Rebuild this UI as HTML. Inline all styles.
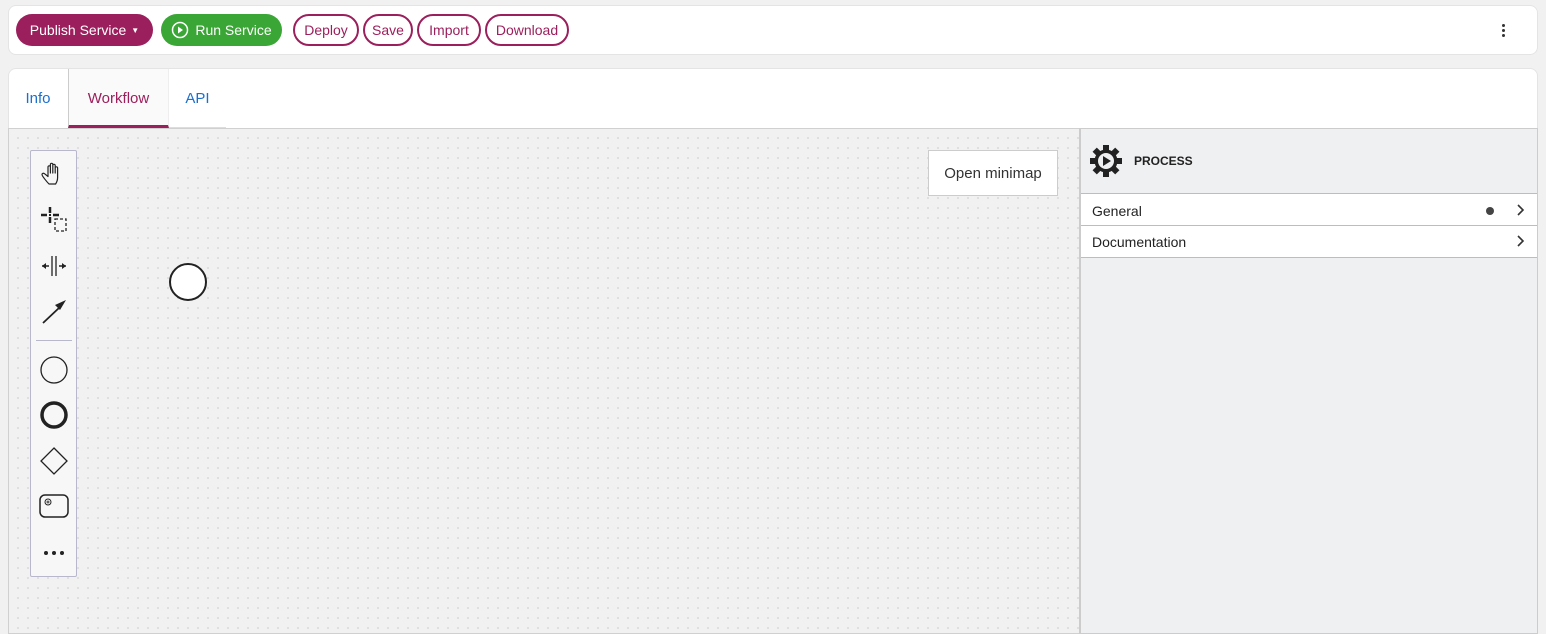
<!DOCTYPE html>
<html><head><style>
body{margin:0;width:1546px;height:634px;background:#f1f1f1;font-family:"Liberation Sans",sans-serif;position:relative;overflow:hidden}
.abs{position:absolute;box-sizing:border-box}
.btn{position:absolute;top:14px;height:32px;border-radius:16px;box-sizing:border-box;font-size:14px;display:flex;align-items:center;justify-content:center}
.ol{border:2px solid #9b1f5c;color:#9b1f5c;background:#fff}
.tab{position:absolute;top:69px;height:59px;font-size:15px;display:flex;align-items:center;justify-content:center;color:#1a6fd0}
.tool{position:absolute;left:0;width:45px;display:flex;justify-content:center}
</style></head><body>
<div class="abs" style="left:8px;top:5px;width:1530px;height:50px;background:#fff;border-radius:8px;border:1px solid #e4e4e4"></div>
<div class="btn" style="left:16px;width:137px;background:#9b1f5c;color:#fff">Publish Service <span style="font-size:8px;margin-left:5px">▼</span></div>
<div class="btn" style="left:161px;width:121px;background:#3aa635;color:#fff"><svg width="18" height="18" viewBox="0 0 18 18" style="margin-right:6px"><circle cx="9" cy="9" r="7.5" fill="none" stroke="#fff" stroke-width="1.5"/><path d="M7 5.5L12 9L7 12.5Z" fill="#fff"/></svg>Run Service</div>
<div class="btn ol" style="left:293px;width:66px">Deploy</div>
<div class="btn ol" style="left:363px;width:50px">Save</div>
<div class="btn ol" style="left:417px;width:64px">Import</div>
<div class="btn ol" style="left:485px;width:84px">Download</div>
<div class="abs" style="left:1502px;top:24px;width:4px;height:16px"><div style="width:3px;height:3px;border-radius:2px;background:#333;margin-bottom:2px"></div><div style="width:3px;height:3px;border-radius:2px;background:#333;margin-bottom:2px"></div><div style="width:3px;height:3px;border-radius:2px;background:#333"></div></div>

<div class="abs" style="left:8px;top:68px;width:1530px;height:61px;background:#fff;border-radius:8px 8px 0 0;border:1px solid #e4e4e4;border-bottom:none"></div>
<div class="tab" style="left:8px;width:60px">Info</div>
<div class="tab" style="left:68px;width:101px;background:#fafafa;color:#9b1f5c;border-left:1px solid #ccc;border-bottom:3px solid #9b1f5c;border-right:1px solid #eee;box-sizing:border-box;padding-top:3px">Workflow</div>
<div class="tab" style="left:169px;width:57px">API</div>
<div class="abs" style="left:169px;top:127px;width:57px;height:1px;background:#ddd"></div>

<div class="abs" style="left:8px;top:128px;width:1072px;height:506px;border:1px solid #d0d0d0;border-right:none;background-color:#f1f1f1;background-image:radial-gradient(#cfcfcf 0.7px,transparent 0.9px);background-size:10px 10px;background-position:4px 4px"></div>

<div class="abs" style="left:30px;top:150px;width:47px;height:427px;background:#f7f7f7;border:1px solid #b8b8cc;border-radius:2px">
 <div class="tool" style="top:10px"><svg width="26" height="26" viewBox="0 0 26 26" fill="none" stroke="#222" stroke-width="1.2" stroke-linejoin="round"><path d="M8 23C6 21 1 15 1 13.5c0-1.2 1.5-1.8 2.7-.7L7 15.5V6c0-1.6 2.4-1.6 2.4 0v6V3.5c0-1.6 2.4-1.6 2.4 0v8.5V4.5c0-1.6 2.4-1.6 2.4 0v7.5V7c0-1.6 2.4-1.6 2.4 0v9.5c0 3-1 5-2 6.5Z"/></svg></div>
 <div class="tool" style="top:55px"><svg width="28" height="28" viewBox="0 0 28 28"><path d="M10 1v6M10 11v6M1 9h6M13 9h6" stroke="#222" stroke-width="2.5"/><rect x="9" y="8" width="2" height="2" fill="#222"/><rect x="15" y="13" width="11" height="12" fill="none" stroke="#222" stroke-width="1.3" stroke-dasharray="3 2"/></svg></div>
 <div class="tool" style="top:103px"><svg width="28" height="24" viewBox="0 0 28 24"><path d="M12 2v20M16 2v20" stroke="#222" stroke-width="1.3"/><path d="M2 12h7M19 12h7" stroke="#222" stroke-width="1.5"/><path d="M2 12l4-3v6zM26 12l-4-3v6z" fill="#222"/></svg></div>
 <div class="tool" style="top:146px"><svg width="28" height="28" viewBox="0 0 28 28"><path d="M3 26L20 10" stroke="#222" stroke-width="1.8"/><path d="M26 3L15 8l5 5z" fill="#222"/></svg></div>
 <div class="abs" style="left:5px;top:189px;width:36px;height:1px;background:#b8b8cc"></div>
 <div class="tool" style="top:204px"><svg width="30" height="30"><circle cx="15" cy="15" r="13" fill="none" stroke="#222" stroke-width="1.3"/></svg></div>
 <div class="tool" style="top:249px"><svg width="30" height="30"><circle cx="15" cy="15" r="12" fill="none" stroke="#222" stroke-width="3.5"/></svg></div>
 <div class="tool" style="top:295px"><svg width="30" height="30"><path d="M15 2L28 15 15 28 2 15Z" fill="none" stroke="#222" stroke-width="1.3"/></svg></div>
 <div class="tool" style="top:342px"><svg width="32" height="26"><rect x="2" y="2" width="28" height="22" rx="5" fill="none" stroke="#222" stroke-width="1.5"/><circle cx="10" cy="9" r="3" fill="none" stroke="#222" stroke-width="1"/><circle cx="10" cy="9" r="1" fill="none" stroke="#222" stroke-width=".8"/></svg></div>
 <div class="tool" style="top:398px"><svg width="24" height="8"><circle cx="4" cy="4" r="2" fill="#222"/><circle cx="12" cy="4" r="2" fill="#222"/><circle cx="20" cy="4" r="2" fill="#222"/></svg></div>
</div>

<svg class="abs" style="left:168px;top:262px" width="40" height="40"><circle cx="20" cy="20" r="18" fill="#fff" stroke="#222" stroke-width="2"/></svg>

<div class="abs" style="left:928px;top:150px;width:130px;height:46px;background:#fff;border:1px solid #ccc;font-size:15px;color:#333;display:flex;align-items:center;justify-content:center">Open minimap</div>

<div class="abs" style="left:1079px;top:128px;width:459px;height:506px;background:#eff0f2;border:1px solid #ccc;border-left:2px solid #ccc"></div>
<svg class="abs" style="left:1089px;top:144px" width="34" height="34" viewBox="0 0 34 34"><g transform="translate(17 17)"><g fill="#222"><rect x="-3" y="-16" width="6" height="6"/><rect x="-3" y="10" width="6" height="6"/><rect x="-16" y="-3" width="6" height="6"/><rect x="10" y="-3" width="6" height="6"/><g transform="rotate(45)"><rect x="-3" y="-16" width="6" height="6"/><rect x="-3" y="10" width="6" height="6"/><rect x="-16" y="-3" width="6" height="6"/><rect x="10" y="-3" width="6" height="6"/></g></g><circle r="11.5" fill="#222"/><circle r="8" fill="#eff0f2"/><path d="M-3-5L5 0-3 5Z" fill="#222"/></g></svg>
<div class="abs" style="left:1134px;top:154px;font-size:12px;font-weight:bold;color:#222">PROCESS</div>
<div class="abs" style="left:1081px;top:193px;width:456px;height:33px;background:#fff;border-top:1px solid #b8bdc8;border-bottom:1px solid #b8bdc8;font-size:14px;color:#222;padding:9px 0 0 11px">General<div class="abs" style="left:405px;top:13px;width:8px;height:8px;border-radius:4px;background:#444"></div><svg class="abs" style="left:435px;top:10px" width="10" height="12"><path d="M2 1l5 5-5 5" fill="none" stroke="#333" stroke-width="1.6"/></svg></div>
<div class="abs" style="left:1081px;top:226px;width:456px;height:32px;background:#fff;border-bottom:1px solid #b8bdc8;font-size:14px;color:#222;padding:8px 0 0 11px">Documentation<svg class="abs" style="left:435px;top:9px" width="10" height="12"><path d="M2 1l5 5-5 5" fill="none" stroke="#333" stroke-width="1.6"/></svg></div>
</body></html>
